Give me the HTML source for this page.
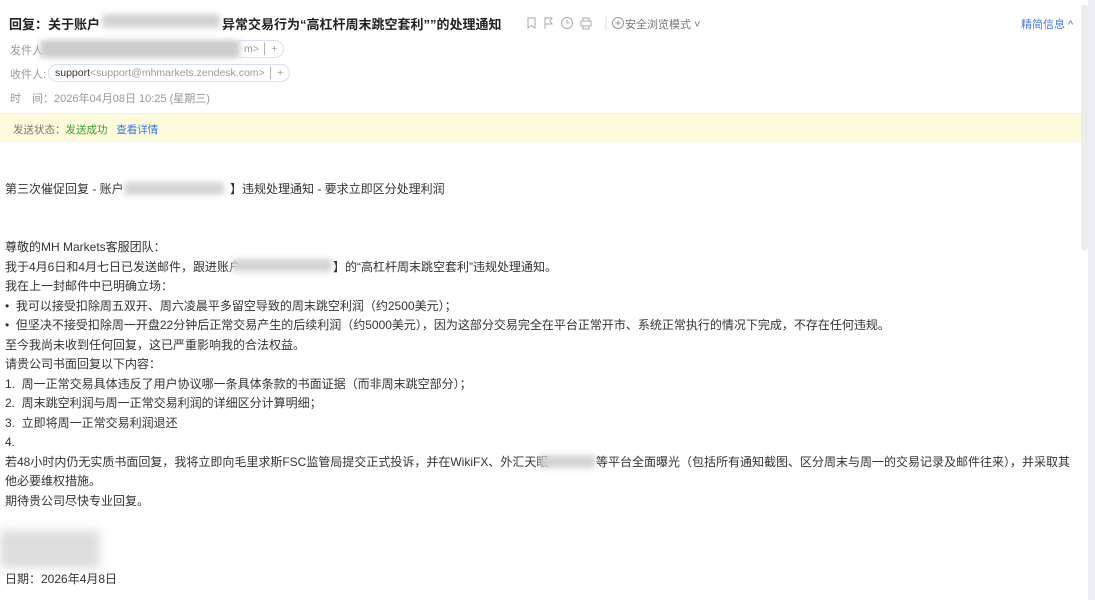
<!DOCTYPE html>
<html><head><meta charset="utf-8"><style>
*{margin:0;padding:0;box-sizing:border-box}
body{width:1095px;height:600px;overflow:hidden;background:#fff;font-family:"Liberation Sans","Noto Sans CJK SC",sans-serif;color:#222;position:relative}
.abs{position:absolute;white-space:nowrap}
.blur{position:absolute;background:#d4d4d4;filter:blur(3px);border-radius:3px}
.g{color:#888;font-size:11px}
.ico{position:absolute;top:16px}
.b{font-size:12px;line-height:19.5px;color:#333}
.pill{position:absolute;border:1px solid #d6e0f0;border-radius:10px;height:18px;font-size:10.5px;line-height:16px;padding:0 6px;color:#999;white-space:nowrap}
</style></head><body>
<div class="abs" style="left:9px;top:14px;font-size:13px;font-weight:bold;color:#222">回复：关于账户</div>
<div class="blur" style="left:102px;top:14px;width:118px;height:14px"></div>
<div class="abs" style="left:222px;top:14px;font-size:13px;font-weight:bold;color:#222">异常交易行为“高杠杆周末跳空套利””的处理通知</div>
<svg class="ico" style="left:526px" width="90" height="14" fill="none" stroke="#aaa" stroke-width="1">
<path d="M2 2h7v10l-3.5-2.5L2 12z"/><path d="M19 1v12M19 2h7l-2 3 2 3h-7"/>
<circle cx="41" cy="7" r="5.5"/><path d="M41 4v3h2.5"/>
<path d="M55 5h10v5h-10zM57 5V2h6v3M57 10v3h6v-3"/>
<path d="M80 0v14" stroke="#ddd"/></svg>
<svg class="ico" style="left:611px" width="14" height="14" fill="none" stroke="#999"><circle cx="7" cy="7" r="5.5"/><path d="M7 4.5v5M4.5 7h5"/></svg>
<div class="abs g" style="left:625px;top:16px;color:#777">安全浏览模式 ˅</div>
<div class="abs" style="left:1021px;top:16px;font-size:11px;color:#4a7bd8">精简信息 ^</div>

<div class="abs g" style="left:10px;top:42px;color:#999">发件人</div>
<div class="blur" style="left:40px;top:40px;width:200px;height:18px;background:#ccc"></div>
<div class="pill" style="left:238px;top:40px;border-left:none;border-radius:0 10px 10px 0">m> │ +</div>
<div class="abs g" style="left:10px;top:66px;color:#999">收件人:</div>
<div class="pill" style="left:48px;top:64px"><span style="color:#333">support</span>&lt;support@mhmarkets.zendesk.com&gt; │ +</div>
<div class="abs g" style="left:10px;top:90px;color:#999">时　间：2026年04月08日 10:25 (星期三)</div>

<div style="position:absolute;left:0;top:113px;width:1081px;height:29px;background:#fefbdd;border-top:1px solid #eee"></div>
<div class="abs" style="left:13px;top:122px;font-size:10.5px;color:#777">发送状态：<span style="color:#3a9a32">发送成功</span>&nbsp;&nbsp;&nbsp;<span style="color:#3a78d8">查看详情</span></div>

<div class="abs b" style="left:5px;top:180px">第三次催促回复 - 账户</div>
<div class="blur" style="left:124px;top:182px;width:100px;height:13px"></div>
<div class="abs b" style="left:230px;top:180px">】违规处理通知 - 要求立即区分处理利润</div>

<div class="abs b" style="left:5px;top:238px">尊敬的MH Markets客服团队：</div>
<div class="abs b" style="left:5px;top:257.5px">我于4月6日和4月七日已发送邮件，跟进账户</div>
<div class="blur" style="left:232px;top:259px;width:100px;height:13px"></div>
<div class="abs b" style="left:333px;top:257.5px">】的“高杠杆周末跳空套利”违规处理通知。</div>
<div class="abs b" style="left:5px;top:277px">我在上一封邮件中已明确立场：</div>
<div class="abs b" style="left:5px;top:296.5px">• &nbsp;我可以接受扣除周五双开、周六凌晨平多留空导致的周末跳空利润（约2500美元）；</div>
<div class="abs b" style="left:5px;top:316px">• &nbsp;但坚决不接受扣除周一开盘22分钟后正常交易产生的后续利润（约5000美元），因为这部分交易完全在平台正常开市、系统正常执行的情况下完成，不存在任何违规。</div>
<div class="abs b" style="left:5px;top:335.5px">至今我尚未收到任何回复，这已严重影响我的合法权益。</div>
<div class="abs b" style="left:5px;top:355px">请贵公司书面回复以下内容：</div>
<div class="abs b" style="left:5px;top:374.5px">1.&nbsp; 周一正常交易具体违反了用户协议哪一条具体条款的书面证据（而非周末跳空部分）；</div>
<div class="abs b" style="left:5px;top:394px">2.&nbsp; 周末跳空利润与周一正常交易利润的详细区分计算明细；</div>
<div class="abs b" style="left:5px;top:413.5px">3.&nbsp; 立即将周一正常交易利润退还</div>
<div class="abs b" style="left:5px;top:433px">4.</div>
<div class="abs b" style="left:5px;top:452.5px">若48小时内仍无实质书面回复，我将立即向毛里求斯FSC监管局提交正式投诉，并在WikiFX、外汇天眼</div>
<div class="blur" style="left:540px;top:455px;width:55px;height:13px"></div>
<div class="abs b" style="left:596px;top:452.5px">等平台全面曝光（包括所有通知截图、区分周末与周一的交易记录及邮件往来），并采取其</div>
<div class="abs b" style="left:5px;top:472px">他必要维权措施。</div>
<div class="abs b" style="left:5px;top:491.5px">期待贵公司尽快专业回复。</div>
<div class="blur" style="left:0;top:530px;width:100px;height:38px;background:#ddd;filter:blur(5px)"></div>
<div class="abs b" style="left:5px;top:570px">日期：2026年4月8日</div>

<div style="position:absolute;left:1081px;top:5px;width:7px;height:245px;background:#ececec;border-radius:3px"></div>
<div style="position:absolute;left:1088px;top:0;width:7px;height:600px;background:#eef0f7"></div>
</body></html>
